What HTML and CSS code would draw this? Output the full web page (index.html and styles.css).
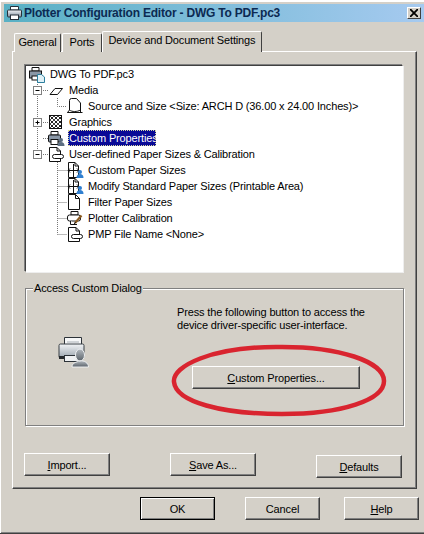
FILE: index.html
```html
<!DOCTYPE html>
<html lang="en">
<head>
  <meta charset="UTF-8" />
  <title>Plotter Configuration Editor</title>
  <meta name="viewport" content="width=device-width, initial-scale=1" />
  <link rel="stylesheet" href="styles.css">
</head>
<body>
  <svg class="defs" width="0" height="0">
    <defs>
      <linearGradient id="title-icon" x1="0" y1="0" x2="0" y2="1">
        <stop offset="0" stop-color="#f4f6f8" />
        <stop offset="1" stop-color="#7d8c9c" />
      </linearGradient>
      <linearGradient id="big-printer" x1="0" y1="0" x2="0" y2="1">
        <stop offset="0" stop-color="#f2f4f6" />
        <stop offset="1" stop-color="#9aa4ae" />
      </linearGradient>
      <linearGradient id="big-person" x1="0" y1="0" x2="0" y2="1">
        <stop offset="0" stop-color="#b4bac0" />
        <stop offset="1" stop-color="#5a626a" />
      </linearGradient>
      <pattern id="checks" width="4" height="4" patternUnits="userSpaceOnUse">
        <rect width="4" height="4" fill="#fff" />
        <rect width="2" height="2" fill="#222" />
        <rect x="2" y="2" width="2" height="2" fill="#444" />
      </pattern>
      <symbol id="tray-page" viewBox="0 0 18 18">
        <path d="M2.5 2.5H10L13.5 6V16.5H2.5Z" fill="#fff" stroke="#111" />
        <path d="M10 2.5V6H13.5" fill="none" stroke="#111" />
        <rect x="5.5" y="9.5" width="11" height="4" rx="2" fill="#fff" stroke="#111" />
      </symbol>
      <symbol id="grid-page" viewBox="0 0 18 18">
        <path d="M2.5 1.5H9L12.5 5V16.5H2.5Z" fill="#fff" stroke="#111" />
        <path d="M9 1.5V5H12.5M7.5 3V16M3 9.5H12M4 7.5L2 9.5L4 11.5M11 7.5L13 9.5L11 11.5" fill="none" stroke="#111" />
        <circle cx="14" cy="11" r="2" fill="#2f7fd0" />
        <path d="M10.5 17C10.5 14 12 13 14 13S17.5 14 17.5 17Z" fill="#2f7fd0" />
      </symbol>
    </defs>
  </svg>

  <div class="window">
    <div class="titlebar">
      <svg class="title-icon" width="18" height="16" viewBox="0 0 18 16">
        <path d="M4.5 1.5H12.5V5H4.5Z" fill="#fff" stroke="#26303a" />
        <rect x="1.5" y="5" width="14" height="7" rx="1" fill="url(#title-icon)" stroke="#26303a" />
        <rect x="4.5" y="10" width="8" height="4.5" fill="#fff" stroke="#26303a" />
      </svg>
      <span class="title-text">Plotter Configuration Editor - DWG To PDF.pc3</span>
      <button class="close-btn">
        <svg width="8" height="8" viewBox="0 0 8 8"><path d="M0 0L8 8M8 0L0 8" stroke="#000" stroke-width="1.8" /></svg>
      </button>
    </div>

    <div class="tabs">
      <div class="tab tab-general">General</div>
      <div class="tab tab-ports">Ports</div>
      <div class="tab tab-active">Device and Document Settings</div>
    </div>

    <div class="panel">
      <div class="tree">
        <!-- connectors and expanders -->
        <svg class="tree-lines" width="376" height="205" viewBox="26 66 376 205">
          <path class="dots" d="M37.5 82V150M43 90.5H49M43 122.5H49M43 138.5H48M43 154.5H48M57.5 98V106.5H67M57.5 162V234.5M57.5 170.5H67M57.5 186.5H67M57.5 202.5H67M57.5 218.5H67M57.5 234.5H67" />
          <g class="expander">
            <rect x="33.5" y="86.5" width="8" height="8" />
            <path d="M35.5 90.5H39.5" />
          </g>
          <g class="expander">
            <rect x="33.5" y="118.5" width="8" height="8" />
            <path d="M35.5 122.5H39.5M37.5 120.5V124.5" />
          </g>
          <g class="expander">
            <rect x="33.5" y="150.5" width="8" height="8" />
            <path d="M35.5 154.5H39.5" />
          </g>
        </svg>

        <div class="row lv0">
          <svg class="icon" viewBox="0 0 18 18">
            <path d="M4 2.5H11V6H4Z" fill="#fff" stroke="#111" />
            <rect x="1.5" y="6" width="12" height="7" fill="#8a97a6" stroke="#111" />
            <rect x="4" y="11" width="6" height="4" fill="#fff" stroke="#111" />
            <path d="M9.5 9.5H13.5L16.5 12V17.5H9.5Z" fill="#dff0f6" stroke="#2c7f9e" />
          </svg>
          <span class="label">DWG To PDF.pc3</span>
        </div>
        <div class="row lv1">
          <svg class="icon" viewBox="0 0 18 18">
            <path d="M3 13.5L8 7.5H15.5L10.5 13.5Z" fill="#fff" stroke="#111" />
          </svg>
          <span class="label">Media</span>
        </div>
        <div class="row lv2">
          <svg class="icon" viewBox="0 0 18 18">
            <path d="M5.5 1.5H10.5L14.5 6V15.5H1.5L3.5 13V3.5Q3.5 1.5 5.5 1.5Z" fill="#fff" stroke="#111" />
            <path d="M3.5 13C6 15 11 15 14.5 13" fill="none" stroke="#111" />
            <path d="M1.5 15.5H16.5" stroke="#111" />
          </svg>
          <span class="label">Source and Size &lt;Size: ARCH D (36.00 x 24.00 Inches)&gt;</span>
        </div>
        <div class="row lv1">
          <svg class="icon" viewBox="0 0 18 18">
            <rect x="2.5" y="2.5" width="12" height="13" fill="url(#checks)" stroke="#111" />
          </svg>
          <span class="label">Graphics</span>
        </div>
        <div class="row lv1">
          <svg class="icon" viewBox="0 0 18 18">
            <path d="M4 2.5H11V6H4Z" fill="#fff" stroke="#111" />
            <rect x="1.5" y="6" width="12" height="7" rx="1" fill="#8a97a6" stroke="#111" />
            <rect x="4" y="10.5" width="7" height="5" fill="#fff" stroke="#111" />
            <circle cx="14" cy="11" r="2" fill="#5b6d80" />
            <path d="M10.5 17C10.5 14 12 13 14 13S17.5 14 17.5 17Z" fill="#5b6d80" />
          </svg>
          <span class="label selected">Custom Properties</span>
        </div>
        <div class="row lv1">
          <svg class="icon"><use href="#tray-page" /></svg>
          <span class="label">User-defined Paper Sizes &amp; Calibration</span>
        </div>
        <div class="row lv2">
          <svg class="icon"><use href="#grid-page" /></svg>
          <span class="label">Custom Paper Sizes</span>
        </div>
        <div class="row lv2">
          <svg class="icon"><use href="#grid-page" /></svg>
          <span class="label">Modify Standard Paper Sizes (Printable Area)</span>
        </div>
        <div class="row lv2">
          <svg class="icon" viewBox="0 0 18 18">
            <path d="M2.5 1.5H9.5L13.5 5.5V16.5H2.5Z" fill="#fff" stroke="#111" />
            <path d="M9.5 1.5V5.5H13.5" fill="none" stroke="#111" />
          </svg>
          <span class="label">Filter Paper Sizes</span>
        </div>
        <div class="row lv2">
          <svg class="icon" viewBox="0 0 18 18">
            <path d="M5 2.5H12V6H5Z" fill="#fff" stroke="#111" />
            <rect x="1.5" y="6" width="13" height="6" rx="2" fill="#fff" stroke="#111" />
            <path d="M4.5 12V15.5H11" fill="#fff" stroke="#111" />
            <path d="M9 14L15.5 6.5" stroke="#8a5a20" stroke-width="2.2" />
            <path d="M8 15.5L9.5 13" stroke="#111" />
          </svg>
          <span class="label">Plotter Calibration</span>
        </div>
        <div class="row lv2">
          <svg class="icon"><use href="#tray-page" /></svg>
          <span class="label">PMP File Name &lt;None&gt;</span>
        </div>
      </div>

      <fieldset class="group">
        <legend>Access Custom Dialog</legend>
        <svg class="big-icon" width="32" height="33" viewBox="0 0 32 33">
          <path d="M6.5 1.5H23.5V9H6.5Z" fill="#f6f7f8" stroke="#2c3238" />
          <path d="M9 6H21" stroke="#aab0b6" />
          <rect x="1" y="8" width="25" height="14" rx="1.5" fill="url(#big-printer)" stroke="#3a4046" />
          <path d="M1 20H26V23H1Z" fill="#24282c" />
          <rect x="6.5" y="19.5" width="15" height="6" fill="#eef0f2" stroke="#2c3238" />
          <ellipse cx="22" cy="19" rx="4.5" ry="6" fill="url(#big-person)" stroke="#eef0f2" />
          <path d="M14 31C14 27 18 26 22 25S30.5 27 30.5 31Z" fill="url(#big-person)" stroke="#eef0f2" />
        </svg>
        <p class="hint">Press the following button to access the<br>device driver-specific user-interface.</p>
        <button class="btn custom-btn"><u>C</u>ustom Properties...</button>
      </fieldset>

      <div class="panel-actions">
        <button class="btn wide"><u>I</u>mport...</button>
        <button class="btn wide"><u>S</u>ave As...</button>
        <button class="btn wide defaults-btn"><u>D</u>efaults</button>
      </div>
    </div>

    <div class="dialog-actions">
      <button class="btn small default">OK</button>
      <button class="btn small cancel-btn">Cancel</button>
      <button class="btn small help-btn"><u>H</u>elp</button>
    </div>

    <!-- red marker circle drawn over the screenshot -->
    <svg class="marker" width="424" height="534" viewBox="0 0 424 534">
      <path d="M174 382C172 366 212 347 276 347C340 346 384 362 384 381C384 400 342 414 282 414C222 414 176 402 174 382Z" />
    </svg>
  </div>
</body>
</html>
```

FILE: styles.css
```css
:root {
  --face: #d4d0c8;
  --shadow: #808080;
  --dark: #404040;
}

body {
  margin: 0;
  background: var(--face);
  font-family: "Liberation Sans", Arial, sans-serif;
  font-size: 11px;
  letter-spacing: -0.15px;
  color: #000;
}

.defs {
  position: absolute;
}

.window {
  position: relative;
  box-sizing: border-box;
  width: 424px;
  height: 534px;
  padding-top: 4px;
  overflow: hidden;
  background: var(--face);
  border-bottom: 1px solid var(--dark);
  box-shadow: inset 1px 2px 0 #fff, inset 0 -1px 0 var(--shadow);
}

/* title bar */
.titlebar {
  display: flex;
  align-items: center;
  height: 18px;
  margin-left: 4px;
  background: linear-gradient(to right, #58b0c4, #a6caf0);
}

.title-icon {
  flex: none;
  margin: 0 0 0 2px;
}

.title-text {
  flex: 1;
  font-size: 12px;
  font-weight: bold;
  letter-spacing: -0.2px;
  color: #0c2a52;
  white-space: nowrap;
}

.close-btn {
  display: flex;
  align-items: center;
  justify-content: center;
  width: 14px;
  height: 12px;
  margin-right: 3px;
  padding: 0;
  background: var(--face);
  border: 1px solid;
  border-color: #fff var(--dark) var(--dark) #fff;
}

/* tabs */
.tabs {
  position: relative;
  z-index: 1;
  display: flex;
  align-items: flex-end;
  height: 21px;
  margin: 9px 0 -1px 14px;
}

.tab {
  box-sizing: border-box;
  height: 19px;
  padding-top: 2px;
  border: 1px solid #fff;
  border-right-color: var(--dark);
  border-bottom: 0;
  border-radius: 2px 2px 0 0;
  background: var(--face);
  text-align: center;
}

.tab-general {
  width: 47px;
}

.tab-ports {
  width: 40px;
  margin-left: 1px;
}

.tab-active {
  width: 160px;
  height: 21px;
  padding-top: 2px;
}

/* main panel */
.panel {
  box-sizing: border-box;
  width: 405px;
  height: 438px;
  margin-left: 12px;
  padding: 13px 0 0 12px;
  border: 1px solid #fff;
  border-right-color: var(--dark);
  border-bottom-color: var(--dark);
  box-shadow: -1px -1px 0 var(--shadow) inset;
}

.tree {
  position: relative;
  box-sizing: border-box;
  width: 378px;
  height: 207px;
  background: #fff;
  border: 1px solid;
  border-color: var(--dark) #fff #fff var(--dark);
  box-shadow: -1px -1px 0 var(--shadow), 1px 1px 0 #eee;
}

.tree-lines {
  position: absolute;
  top: 0;
  left: 0;
}

.dots {
  fill: none;
  stroke: #777;
  stroke-dasharray: 1 1;
}

.expander rect {
  fill: #fff;
  stroke: #808080;
}

.expander path {
  fill: none;
  stroke: #000;
}

.row {
  position: relative;
  display: flex;
  align-items: center;
  height: 16px;
  white-space: nowrap;
}

.lv0 {
  padding-left: 2px;
}

.lv1 {
  padding-left: 21px;
}

.lv2 {
  padding-left: 40px;
}

.icon {
  flex: none;
  width: 18px;
  height: 18px;
  margin-right: 3px;
  overflow: visible;
}

.label {
  padding: 0 1px;
  line-height: 16px;
}

.selected {
  box-sizing: border-box;
  width: 88px;
  background: #0a0a96;
  color: #fff;
  outline: 1px dotted #d8d8a0;
  outline-offset: -1px;
}

/* custom dialog group */
.group {
  position: relative;
  box-sizing: border-box;
  width: 379px;
  height: 145px;
  margin: 9px 0 0;
  padding: 0;
  border: 1px solid var(--shadow);
  box-shadow: 1px 1px 0 #fff, inset 1px 1px 0 #fff;
}

.group legend {
  margin-left: 7px;
  padding: 0 1px;
  background: var(--face);
  line-height: 14px;
}

.big-icon {
  position: absolute;
  top: 41px;
  left: 32px;
}

.hint {
  margin: 11px 0 0 151px;
  line-height: 13px;
}

.custom-btn {
  display: block;
  width: 168px;
  height: 23px;
  margin: 34px 0 0 166px;
}

/* buttons */
.btn {
  box-sizing: border-box;
  padding: 0;
  background: var(--face);
  font-family: inherit;
  font-size: 11px;
  letter-spacing: inherit;
  color: #000;
  border: 1px solid;
  border-color: #fff var(--dark) var(--dark) #fff;
  box-shadow: inset -1px -1px 0 var(--shadow);
}

.wide {
  width: 86px;
  height: 23px;
}

.small {
  width: 75px;
  height: 23px;
}

.panel-actions {
  display: flex;
  align-items: flex-start;
  gap: 60px;
  margin: 27px 0 0 -1px;
}

.defaults-btn {
  margin-top: 2px;
}

.dialog-actions {
  display: flex;
  margin: 8px 0 0 140px;
}

.cancel-btn {
  margin-left: 30px;
}

.help-btn {
  margin-left: 24px;
}

.default {
  border-color: #000;
  box-shadow: inset 1px 1px 0 #fff, inset -1px -1px 0 var(--shadow);
}

/* hand-drawn ellipse */
.marker {
  position: absolute;
  top: 0;
  left: 0;
  pointer-events: none;
}

.marker path {
  fill: none;
  stroke: #d9242f;
  stroke-width: 4.5;
}
```
